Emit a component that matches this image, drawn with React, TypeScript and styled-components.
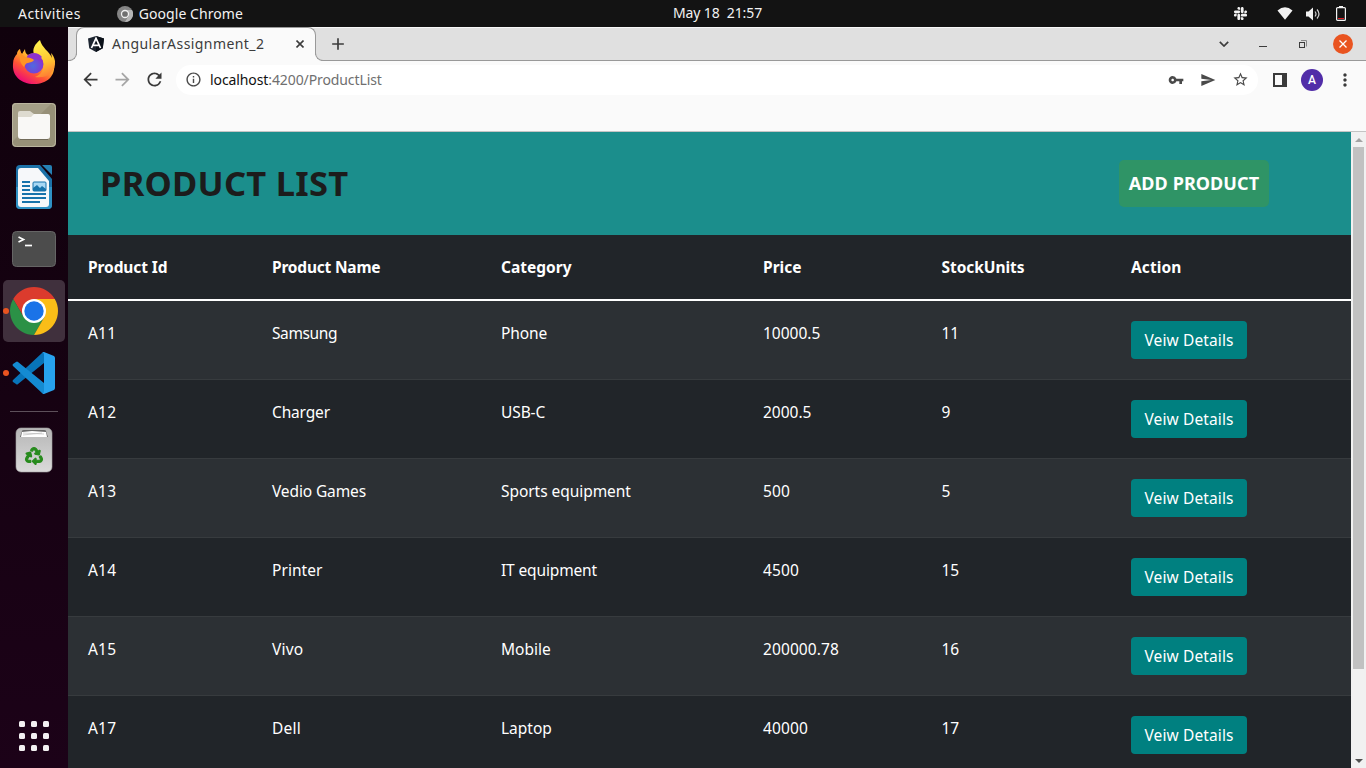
import React from "react";
import styled, { createGlobalStyle } from "styled-components";
import {
  MdAdd, MdArrowBack, MdArrowForward, MdInfoOutline, MdMoreVert,
  MdRefresh, MdSend, MdStarBorder, MdVpnKey,
} from "react-icons/md";
import { FaRecycle, FaSlack } from "react-icons/fa";

const GlobalStyle = createGlobalStyle`
  *, *::before, *::after { box-sizing: border-box; }
  body { margin: 0; overflow: hidden; font-family: "Noto Sans", "Open Sans", sans-serif; }
  svg { display: block; flex: none; }
`;

const Desktop = styled.div`
  width: 1366px;
  height: 768px;
  display: flex;
  flex-direction: column;
  overflow: hidden;
  background: #14020f;
`;

const Label = styled.span<{ $spacing?: number }>`
  white-space: pre;
  letter-spacing: ${(p) => p.$spacing ?? 0}px;
`;

const TopBar = styled.header`
  height: 27px;
  flex: none;
  display: grid;
  grid-template-columns: 1fr auto 1fr;
  align-items: center;
  padding: 0 20px 0 18px;
  background: #131313;
  color: #f2f2f2;
  font-size: 14px;
  line-height: 27px;
`;

const TopLeft = styled.div`
  display: flex;
  align-items: center;
`;

const AppMenu = styled.div`
  display: flex;
  align-items: center;
  gap: 6px;
  margin-left: 36px;
`;

const Clock = styled.div`
  padding-left: 71px;
  padding-bottom: 1px;
  line-height: 26px;
`;

const Tray = styled.div`
  display: flex;
  align-items: center;
  justify-content: flex-end;
`;

const TrayIcon = styled.span<{ $gap: number }>`
  display: flex;
  margin-left: ${(p) => p.$gap}px;
`;

const Workspace = styled.div`
  flex: 1;
  min-height: 0;
  display: flex;
`;

const Dock = styled.nav`
  width: 68px;
  flex: none;
  display: flex;
  flex-direction: column;
  align-items: center;
  padding: 5px 0 17px;
  background: linear-gradient(#10010c, #160212 50%, #1c0218);
`;

const DockItem = styled.div<{ $active?: boolean; $running?: boolean }>`
  position: relative;
  width: 62px;
  height: 62px;
  flex: none;
  display: flex;
  align-items: center;
  justify-content: center;
  border-radius: 5px;
  background: ${(p) => (p.$active ? "#40303d" : "transparent")};
  &::before {
    content: "";
    display: ${(p) => (p.$running ? "block" : "none")};
    position: absolute;
    left: 0;
    top: 28px;
    width: 6px;
    height: 6px;
    border-radius: 50%;
    background: #e95420;
  }
`;

const DockDivider = styled.div`
  width: 48px;
  height: 1px;
  flex: none;
  margin: 7px 0 7px;
  background: #5d505a;
`;

const AppsGrid = styled.div`
  display: grid;
  grid-template-columns: repeat(3, 6px);
  gap: 6px;
  margin-top: auto;
`;

const AppsDot = styled.i`
  width: 6px;
  height: 6px;
  border-radius: 1.5px;
  background: #f2f0f1;
`;

const Browser = styled.main`
  flex: 1;
  min-width: 0;
  display: flex;
  flex-direction: column;
  background: #fafafa;
`;

const TabStrip = styled.div`
  height: 34px;
  flex: none;
  display: flex;
  align-items: stretch;
  padding-left: 8px;
  background: #e0e0e0;
  border-top: 1px solid #f7f7f7;
  box-shadow: inset 0 -1px #999;
  color: #3c3c3c;
`;

const Tab = styled.div`
  position: relative;
  width: 240px;
  display: flex;
  align-items: center;
  padding: 0 11px 2px 11px;
  margin-top: -1px;
  background: #fafafa;
  border: 1px solid #999;
  border-bottom: 0;
  border-radius: 8px 8px 0 0;
  font-size: 14px;
  &::before, &::after {
    content: "";
    position: absolute;
    bottom: 0;
    width: 9px;
    height: 9px;
    border-bottom: 1px solid #999;
    background: #e0e0e0;
  }
  &::before {
    left: -9px;
    border-right: 1px solid #999;
    border-bottom-right-radius: 8px;
    box-shadow: 3px 3px 0 #fafafa;
    clip-path: inset(0);
  }
  &::after {
    right: -9px;
    border-left: 1px solid #999;
    border-bottom-left-radius: 8px;
    box-shadow: -3px 3px 0 #fafafa;
    clip-path: inset(0);
  }
`;

const TabTitle = styled.div`
  flex: 1;
  margin-left: 8px;
`;

const NewTab = styled.div`
  display: flex;
  align-items: center;
  margin-left: 12px;
  padding-bottom: 1px;
`;

const WindowControls = styled.div`
  display: flex;
  align-items: center;
  margin-left: auto;
  padding: 0 13px 1px 0;
`;

const CloseWindow = styled.div`
  width: 20px;
  height: 20px;
  display: flex;
  align-items: center;
  justify-content: center;
  margin-left: 26px;
  border-radius: 50%;
  background: #e95420;
  color: #fff;
`;

const Toolbar = styled.div`
  height: 70px;
  flex: none;
  display: flex;
  align-items: flex-start;
  padding: 4px 5px 0 12px;
  color: #3c3c3c;
`;

const ToolButton = styled.div<{ $width: number; $dim?: boolean }>`
  width: ${(p) => p.$width}px;
  height: 29px;
  display: flex;
  align-items: center;
  justify-content: center;
  flex: none;
  color: ${(p) => (p.$dim ? "#a5a5a5" : "#3a3a3a")};
`;

const AddressBar = styled.div`
  width: 1082px;
  height: 30px;
  flex: none;
  display: flex;
  align-items: center;
  margin-right: 6px;
  padding: 0 9px 1px 9px;
  border-radius: 15px;
  background: #fff;
  color: #4a4a4a;
`;

const Url = styled.div`
  flex: 1;
  margin-left: 8px;
  font-size: 14px;
  line-height: 28px;
  color: #6f6f6f;
  b { font-weight: 400; color: #111; }
`;

const AddressIcon = styled.div`
  width: 32px;
  display: flex;
  justify-content: center;
  &:last-child { width: 17px; margin-left: 8px; }
`;

const Avatar = styled.div`
  width: 22px;
  height: 22px;
  flex: none;
  margin: 4px 5px;
  border-radius: 50%;
  background: #512da8;
  color: #fff;
  font: 500 12px/22px Roboto, sans-serif;
  text-align: center;
`;

const Viewport = styled.div`
  flex: 1;
  min-height: 0;
  display: flex;
  border-top: 1px solid #c4c4c4;
`;

const Page = styled.div`
  width: 1283px;
  display: flex;
  flex-direction: column;
  overflow: hidden;
  background: #212529;
  color: #fff;
`;

const PageHeader = styled.div`
  height: 103px;
  flex: none;
  display: flex;
  align-items: center;
  justify-content: space-between;
  padding: 0 82px 0 32px;
  background: #1b8e8c;
`;

const Title = styled.h1`
  margin: 0;
  padding-bottom: 2px;
  font-size: 34.5px;
  font-weight: 700;
  line-height: 48px;
  color: #1c1c1c;
`;

const AddButton = styled.div`
  width: 150px;
  height: 47px;
  border-radius: 5px;
  background: #2f9466;
  font-size: 18px;
  font-weight: 700;
  line-height: 47px;
  text-align: center;
`;

const Row = styled.div<{ $striped?: boolean }>`
  height: 79px;
  flex: none;
  display: grid;
  grid-template-columns: 184px 229px 262px 178.5px 189.5px 1fr;
  padding-top: 20px;
  background: ${(p) => (p.$striped ? "#2c3034" : "#212529")};
  border-bottom: 1px solid #373b3e;
  font-size: 15.5px;
  line-height: 24px;
`;

const HeadRow = styled(Row)`
  height: 66px;
  border-bottom: 2px solid #fff;
  font-weight: 700;
`;

const Cell = styled.div`
  padding-left: 20px;
`;

const DetailsButton = styled.div`
  width: 116px;
  height: 38px;
  border-radius: 4px;
  background: #008080;
  line-height: 38px;
  text-align: center;
`;

const Scrollbar = styled.div`
  width: 15px;
  display: flex;
  flex-direction: column;
  align-items: center;
  background: #f1f1f1;
`;

const ScrollArrow = styled.div`
  height: 15px;
  display: flex;
  align-items: center;
`;

const ScrollThumb = styled.div`
  width: 11px;
  height: 522px;
  margin-bottom: auto;
  background: #c1c1c1;
`;

const Firefox = () => (
  <svg width="44" height="46" viewBox="0 0 44 46">
    <defs>
      <linearGradient id="fx" x1=".85" y1=".1" x2=".25" y2=".95">
        <stop offset="0" stopColor="#fff44f" />
        <stop offset=".35" stopColor="#ffb02e" />
        <stop offset=".65" stopColor="#ff5634" />
        <stop offset="1" stopColor="#ed0a78" />
      </linearGradient>
      <linearGradient id="fy" x1=".4" y1="0" x2=".6" y2="1">
        <stop offset="0" stopColor="#fff34e" />
        <stop offset=".6" stopColor="#ffc22f" />
        <stop offset="1" stopColor="#ff7a35" />
      </linearGradient>
      <radialGradient id="fp" cx=".45" cy=".6" r=".6">
        <stop offset="0" stopColor="#4d6be0" />
        <stop offset="1" stopColor="#8c2fd0" />
      </radialGradient>
    </defs>
    <path fill="url(#fx)" d="M8 9c0 2 1 4 2 5l3-5c0 3 1 5 3 6 4-2 9-2 13 1 6-5 8-1 13 7 2 13-7 21-20 21C9 44 0 36 1 24c0-5 2-8 4-10 0-2 1-4 3-5z" />
    <path fill="url(#fy)" d="M28 0c-5 4-8 9-6 14 4 0 8 3 9 8 2 7-2 13-8 15 12 2 21-5 20-16-1-4-2-6-4-8l1 5c-3-7-10-10-12-18z" />
    <circle cx="22" cy="24" r="9.5" fill="url(#fp)" />
    <path fill="#8d31cf" d="M15 16c4-4 11-4 15 1l-2 1c2 1 3 3 3 5-4-4-9-5-15-3z" />
    <path fill="#ff9425" d="M8 9c0 3 2 6 5 8 2 1 6 0 9 3-1 2-4 2-6 3-2 0-3 2-4 4-3-3-5-7-4-12-1-2-1-4 0-6z" />
  </svg>
);

const Files = () => (
  <svg width="46" height="46" viewBox="0 0 46 46">
    <rect x="1" y="1" width="44" height="44" rx="4" fill="#979078" />
    <path d="M1 5a4 4 0 0 1 4-4h36L1 40z" fill="#a49e87" />
    <rect x="1.5" y="1.5" width="43" height="43" rx="4" fill="none" stroke="#bab59f" />
    <path d="M7 11q0-2 2-2h10l4 3h13q2 0 2 2v6H7z" fill="#dedbd0" />
    <path d="M7 15h13l3-3h14q2 0 2 2v20q0 3-3 3H10q-3 0-3-3z" fill="#f9f8f6" />
    <path d="M9 37.5h28" stroke="#726b59" />
  </svg>
);

const Writer = () => (
  <svg width="38" height="46" viewBox="0 0 38 46">
    <path d="M5 1h20l12 14v26q0 4-4 4H5q-4 0-4-4V5q0-4 4-4z" fill="#1c72a8" />
    <path d="M1 23h36v18q0 4-4 4H5q-4 0-4-4z" fill="#2f92c5" />
    <path d="M6 4h17l11 13v23q0 3-3 3H6q-3 0-3-3V7q0-3 3-3z" fill="#f6f8fa" />
    <path d="M27 1h8q2 0 2 2v8z" fill="#2580b4" />
    <path d="M7 18h8M7 22h8M7 26h8M7 30h24M7 34h24M7 38h18" stroke="#1773ab" strokeWidth="2" />
    <rect x="18" y="18" width="13" height="9" rx="1" fill="#a8d8f4" stroke="#1773ab" />
    <path d="M18 27v-3l4-3 3 3 2-2 4 3v2z" fill="#1773ab" />
  </svg>
);

const Terminal = () => (
  <svg width="46" height="38" viewBox="0 0 46 38">
    <rect x="1.5" y="1.5" width="43" height="35" rx="4" fill="#4c4c4c" stroke="#656565" />
    <path d="M7.5 7l5 2.5-5 2.5" fill="none" stroke="#fff" strokeWidth="1.7" />
    <path d="M14 15.5h7" stroke="#fff" strokeWidth="1.7" />
  </svg>
);

const Chrome = () => (
  <svg width="48" height="48" viewBox="0 0 48 48">
    <path d="M24 12h20.78A24 24 0 0 0 3.22 12l10.39 18z" fill="#db3b2d" />
    <path d="M13.61 30L3.22 12A24 24 0 0 0 24 48l10.39-18z" fill="#2b9146" />
    <path d="M34.39 30L24 48A24 24 0 0 0 44.78 12H24z" fill="#fabd18" />
    <circle cx="24" cy="24" r="12" fill="#fff" />
    <circle cx="24" cy="24" r="9.7" fill="#1a73e8" />
  </svg>
);

const Code = () => (
  <svg width="44" height="44" viewBox="0 0 44 44">
    <path d="M1 29q-1 1 0 2l3 2q1 1 2 0L32 12V1q-1 0-2 1z" fill="#0874b9" />
    <path d="M1 15q-1-1 0-2l3-2q1-1 2 0l26 21v11q-1 0-2-1z" fill="#148bd2" />
    <path d="M32 1l10 4q1 1 1 2v30q0 1-1 2l-10 4q-1 0-2-1 2 1 2-2V4q0-3-2-2 1-1 2-1z" fill="#27a2ee" />
  </svg>
);

const Trash = () => (
  <svg width="38" height="46" viewBox="0 0 38 46">
    <defs>
      <linearGradient id="tr" x1="0" y1="0" x2="0" y2="1">
        <stop offset="0" stopColor="#b6b6b6" />
        <stop offset="1" stopColor="#dadada" />
      </linearGradient>
    </defs>
    <rect x="1" y="1" width="36" height="44" rx="5" fill="url(#tr)" stroke="#a3a3a3" strokeWidth=".6" />
    <path d="M5 10l2-6q0-1 2-1h20q2 0 2 1l2 6z" fill="#696969" />
    <path d="M6 10l1-5 10-1 14 1 1 5z" fill="#fff" />
    <path d="M8 6l21 1M8 8l19-2" stroke="#bbb" strokeWidth=".7" />
    <g transform="translate(10.5 20.5)" color="#278b1d"><FaRecycle size={17} stroke="#278b1d" strokeWidth={34} overflow="visible" /></g>
  </svg>
);

const ChromeMono = () => (
  <svg width="16" height="16" viewBox="0 0 16 16">
    <circle cx="8" cy="8" r="8" fill="#858585" />
    <path d="M8 4h7A8 8 0 0 1 8 16l3.5-6z" fill="#b5b5b5" />
    <circle cx="8" cy="8" r="3.5" fill="#707070" stroke="#f2f2f2" strokeWidth="1.3" />
  </svg>
);

const AngularMark = () => (
  <svg width="16" height="16" viewBox="0 0 16 16">
    <path d="M8 0l8 2.6-1.2 9.6L8 16l-6.8-3.8L0 2.6z" fill="#1d2530" />
    <path d="M8 0l8 2.6-1.2 9.6L8 16z" fill="#0b1119" />
    <path d="M3.5 12L8 2.3 12.5 12M5.4 9.3h5.2" fill="none" stroke="#fff" strokeWidth="1.7" />
  </svg>
);

interface Text {
  text: string;
  spacing?: number;
}

const products: Text[][] = [
  [{ text: "A11", spacing: 0.2 }, { text: "Samsung", spacing: -0.4 }, { text: "Phone", spacing: -0.1 }, { text: "10000.5" }, { text: "11" }],
  [{ text: "A12", spacing: 0.2 }, { text: "Charger", spacing: -0.15 }, { text: "USB-C", spacing: -0.1 }, { text: "2000.5" }, { text: "9" }],
  [{ text: "A13", spacing: 0.2 }, { text: "Vedio Games", spacing: -0.12 }, { text: "Sports equipment", spacing: -0.05 }, { text: "500", spacing: 0.1 }, { text: "5" }],
  [{ text: "A14", spacing: 0.2 }, { text: "Printer", spacing: 0.05 }, { text: "IT equipment", spacing: -0.14 }, { text: "4500", spacing: 0.1 }, { text: "15" }],
  [{ text: "A15", spacing: 0.2 }, { text: "Vivo", spacing: 0.2 }, { text: "Mobile" }, { text: "200000.78", spacing: 0.1 }, { text: "16" }],
  [{ text: "A17", spacing: 0.2 }, { text: "Dell", spacing: 0.2 }, { text: "Laptop" }, { text: "40000", spacing: 0.12 }, { text: "17" }],
];

const headings: Text[] = [
  { text: "Product Id", spacing: -0.1 },
  { text: "Product Name", spacing: -0.2 },
  { text: "Category" },
  { text: "Price" },
  { text: "StockUnits", spacing: -0.05 },
  { text: "Action", spacing: 0.1 },
];

export default function App() {
  return (
    <Desktop>
      <GlobalStyle />
      <TopBar>
        <TopLeft>
          <Label $spacing={0.45}>Activities</Label>
          <AppMenu>
            <ChromeMono />
            <Label $spacing={0.05}>Google Chrome</Label>
          </AppMenu>
        </TopLeft>
        <Clock><Label $spacing={-0.1}>May 18  21:57</Label></Clock>
        <Tray>
          <TrayIcon $gap={0}><FaSlack size={15} /></TrayIcon>
          <TrayIcon $gap={29}>
            <svg width="16" height="13" viewBox="0 0 16 13"><path d="M.5 3.5Q8-3 15.5 3.5L8 12.8z" fill="#f2f2f2" /></svg>
          </TrayIcon>
          <TrayIcon $gap={12}>
            <svg width="16" height="14" viewBox="0 0 16 14">
              <path d="M1 4.5h2.500L8 .5v13l-4.500-4H1z" fill="#f2f2f2" />
              <path d="M10 4.5q2 2.500 0 5M12 2.500q4 4.500 0 9" fill="none" stroke="#d0d0d0" strokeWidth="1.2" />
            </svg>
          </TrayIcon>
          <TrayIcon $gap={15}>
            <svg width="10" height="15" viewBox="0 0 10 15">
              <path d="M3 0h4v2H3z" fill="#f2f2f2" />
              <rect x=".6" y="1.6" width="8.8" height="12.8" rx="1" fill="none" stroke="#f2f2f2" strokeWidth="1.2" />
              <path d="M2 12.5h6" stroke="#e01b24" />
            </svg>
          </TrayIcon>
        </Tray>
      </TopBar>
      <Workspace>
        <Dock>
          <DockItem><Firefox /></DockItem>
          <DockItem><Files /></DockItem>
          <DockItem><Writer /></DockItem>
          <DockItem><Terminal /></DockItem>
          <DockItem $active $running><Chrome /></DockItem>
          <DockItem $running><Code /></DockItem>
          <DockDivider />
          <DockItem><Trash /></DockItem>
          <AppsGrid>{Array.from({ length: 9 }, (_, i) => <AppsDot key={i} />)}</AppsGrid>
        </Dock>
        <Browser>
          <TabStrip>
            <Tab>
              <AngularMark />
              <TabTitle><Label $spacing={0.43}>AngularAssignment_2</Label></TabTitle>
              <svg width="8" height="8" viewBox="0 0 8 8"><path d="M.5.5l7 7M7.5.5l-7 7" stroke="#3c3c3c" strokeWidth="1.6" /></svg>
            </Tab>
            <NewTab><MdAdd size={20} /></NewTab>
            <WindowControls>
              <svg width="10" height="6" viewBox="0 0 10 6"><path d="M.8.8L5 5 9.2.8" fill="none" stroke="#3c3c3c" strokeWidth="1.7" /></svg>
              <svg width="42" height="8" viewBox="0 0 42 8"><path d="M30 6.5h8" stroke="#3c3c3c" /></svg>
              <svg width="36" height="8" viewBox="0 0 36 8">
                <path d="M30 .5h5.5v6" fill="none" stroke="#8a8a8a" />
                <rect x="28.5" y="2.5" width="5" height="5" fill="none" stroke="#3c3c3c" />
              </svg>
              <CloseWindow>
                <svg width="8" height="8" viewBox="0 0 8 8"><path d="M.5.5l7 7M7.5.5l-7 7" stroke="#fff" strokeWidth="1.3" /></svg>
              </CloseWindow>
            </WindowControls>
          </TabStrip>
          <Toolbar>
            <ToolButton $width={21}><MdArrowBack size={21} /></ToolButton>
            <ToolButton $width={43} $dim><MdArrowForward size={21} /></ToolButton>
            <ToolButton $width={21}><MdRefresh size={21} /></ToolButton>
            <ToolButton $width={11} />
            <AddressBar>
              <MdInfoOutline size={17} />
              <Url><Label $spacing={-0.1}><b>localhost</b>:4200/ProductList</Label></Url>
              <AddressIcon><MdVpnKey size={16} /></AddressIcon>
              <AddressIcon><MdSend size={16} /></AddressIcon>
              <AddressIcon><MdStarBorder size={17} /></AddressIcon>
            </AddressBar>
            <ToolButton $width={32}>
              <svg width="14" height="14" viewBox="0 0 14 14"><path d="M1 1h12v12H1z" fill="none" stroke="#3a3a3a" strokeWidth="2" /><path d="M9 1h4v12H9z" fill="#3a3a3a" /></svg>
            </ToolButton>
            <Avatar>A</Avatar>
            <ToolButton $width={33}><MdMoreVert size={20} /></ToolButton>
          </Toolbar>
          <Viewport>
            <Page>
              <PageHeader>
                <Title><Label $spacing={0.25}>PRODUCT LIST</Label></Title>
                <AddButton><Label $spacing={0.08}>ADD PRODUCT</Label></AddButton>
              </PageHeader>
              <HeadRow>
                {headings.map((h) => <Cell key={h.text}><Label $spacing={h.spacing}>{h.text}</Label></Cell>)}
              </HeadRow>
              {products.map((product, i) => (
                <Row key={product[0].text} $striped={i % 2 === 0}>
                  {product.map((value, j) => <Cell key={j}><Label $spacing={value.spacing}>{value.text}</Label></Cell>)}
                  <Cell><DetailsButton><Label $spacing={0.12}>Veiw Details</Label></DetailsButton></Cell>
                </Row>
              ))}
            </Page>
            <Scrollbar>
              <ScrollArrow><svg width="8" height="4" viewBox="0 0 8 4"><path d="M0 4l4-4 4 4z" fill="#a3a3a3" /></svg></ScrollArrow>
              <ScrollThumb />
              <ScrollArrow><svg width="8" height="4" viewBox="0 0 8 4"><path d="M0 0l4 4 4-4z" fill="#505050" /></svg></ScrollArrow>
            </Scrollbar>
          </Viewport>
        </Browser>
      </Workspace>
    </Desktop>
  );
}
